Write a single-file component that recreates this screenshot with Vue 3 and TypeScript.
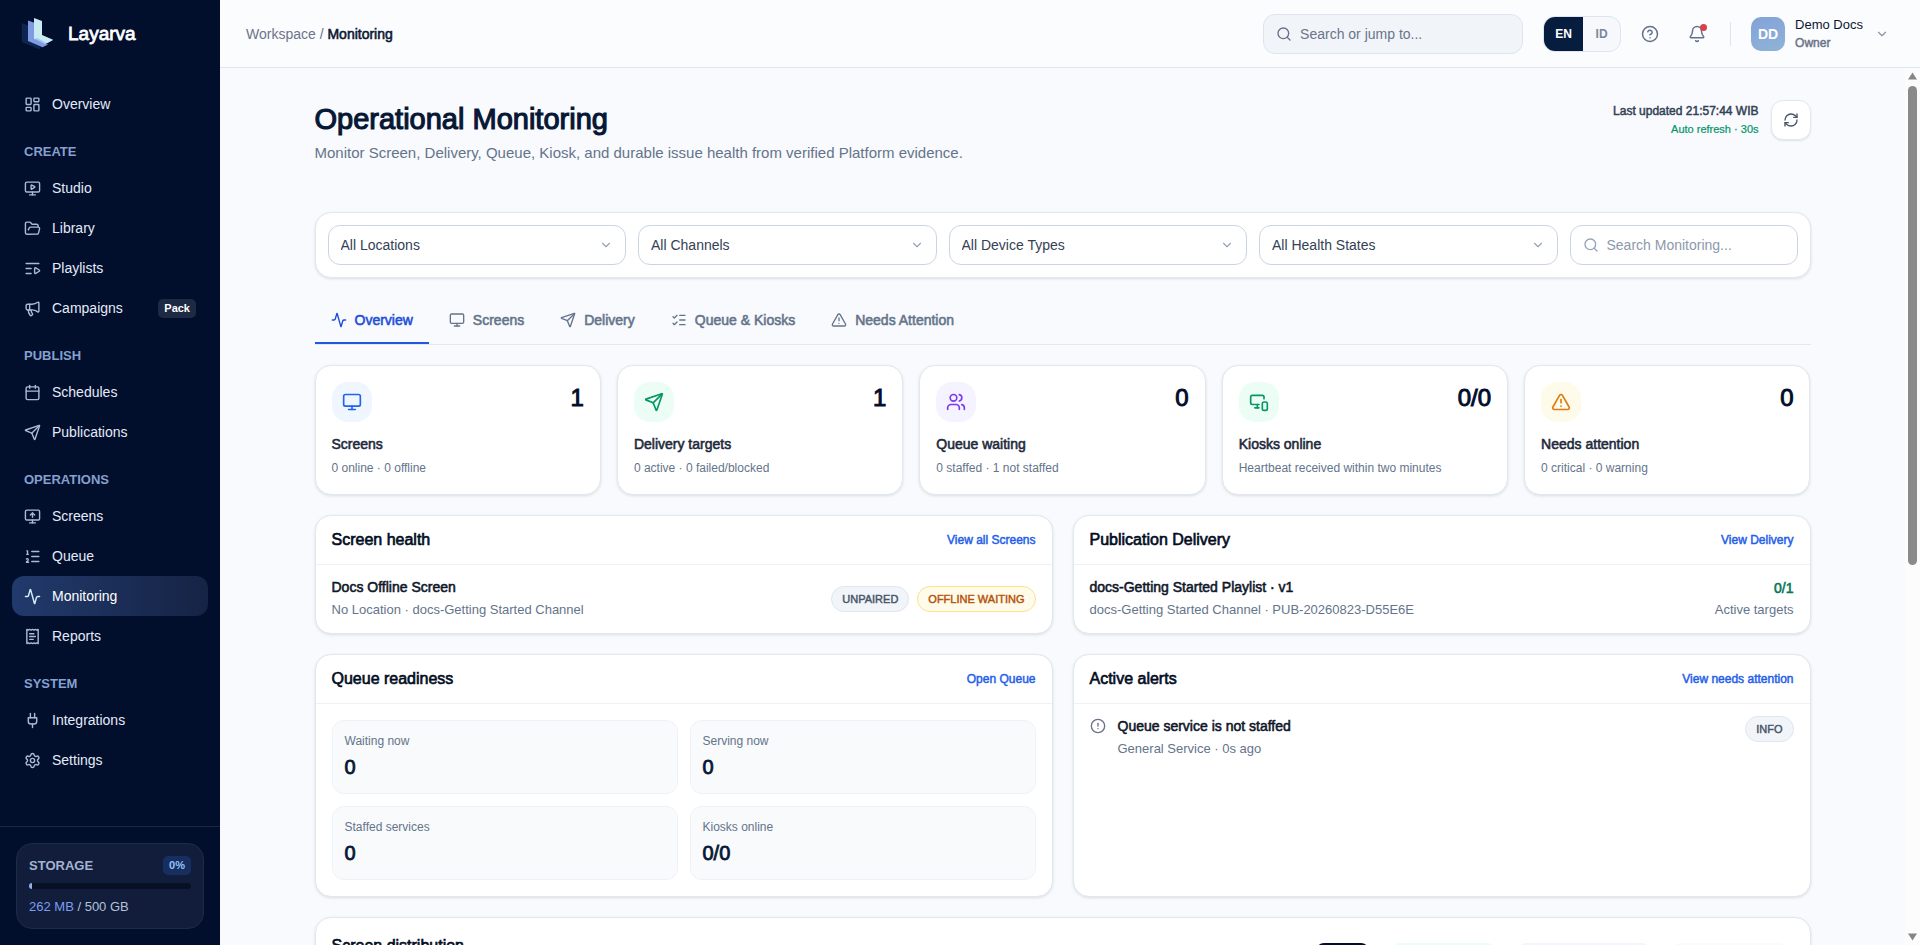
<script setup lang="ts">
import { h, ref } from 'vue'

const shapes: Record<string, string[]> = {
  dashboard: ['M4 3h5a1 1 0 0 1 1 1v7a1 1 0 0 1-1 1H4a1 1 0 0 1-1-1V4a1 1 0 0 1 1-1z', 'M15 3h5a1 1 0 0 1 1 1v3a1 1 0 0 1-1 1h-5a1 1 0 0 1-1-1V4a1 1 0 0 1 1-1z', 'M15 12h5a1 1 0 0 1 1 1v7a1 1 0 0 1-1 1h-5a1 1 0 0 1-1-1v-7a1 1 0 0 1 1-1z', 'M4 16h5a1 1 0 0 1 1 1v3a1 1 0 0 1-1 1H4a1 1 0 0 1-1-1v-3a1 1 0 0 1 1-1z'],
  monitor: ['M4 3h16a2 2 0 0 1 2 2v10a2 2 0 0 1-2 2H4a2 2 0 0 1-2-2V5a2 2 0 0 1 2-2z', 'M12 17v4', 'M8 21h8'],
  monitorPlay: ['M4 3h16a2 2 0 0 1 2 2v10a2 2 0 0 1-2 2H4a2 2 0 0 1-2-2V5a2 2 0 0 1 2-2z', 'M12 17v4', 'M8 21h8', 'M15.033 9.44a.647.647 0 0 1 0 1.12l-4.065 2.352a.645.645 0 0 1-.968-.56V7.648a.645.645 0 0 1 .967-.56z'],
  monitorUp: ['M4 3h16a2 2 0 0 1 2 2v10a2 2 0 0 1-2 2H4a2 2 0 0 1-2-2V5a2 2 0 0 1 2-2z', 'M12 17v4', 'M8 21h8', 'm9 10 3-3 3 3', 'M12 13V7'],
  folder: ['m6 14 1.5-2.9A2 2 0 0 1 9.24 10H20a2 2 0 0 1 1.94 2.5l-1.54 6a2 2 0 0 1-1.95 1.5H4a2 2 0 0 1-2-2V5a2 2 0 0 1 2-2h3.9a2 2 0 0 1 1.69.9l.81 1.2a2 2 0 0 0 1.67.9H18a2 2 0 0 1 2 2v2'],
  playlist: ['M21 5H3', 'M10 12H3', 'M10 19H3', 'M15 12.003a1 1 0 0 1 1.517-.859l4.997 2.997a1 1 0 0 1 0 1.718l-4.997 2.997a1 1 0 0 1-1.517-.86z'],
  megaphone: ['M11 6a13 13 0 0 0 8.4-2.8A1 1 0 0 1 21 4v12a1 1 0 0 1-1.6.8A13 13 0 0 0 11 14H5a2 2 0 0 1-2-2V8a2 2 0 0 1 2-2z', 'M6 14a12 12 0 0 0 2.4 7.2 2 2 0 0 0 3.2-2.4A8 8 0 0 1 10 14', 'M8 6v8'],
  calendar: ['M8 2v4', 'M16 2v4', 'M5 4h14a2 2 0 0 1 2 2v14a2 2 0 0 1-2 2H5a2 2 0 0 1-2-2V6a2 2 0 0 1 2-2z', 'M3 10h18'],
  send: ['M14.536 21.686a.5.5 0 0 0 .937-.024l6.5-19a.496.496 0 0 0-.635-.635l-19 6.5a.5.5 0 0 0-.024.937l7.93 3.18a2 2 0 0 1 1.112 1.11z', 'm21.854 2.147-10.94 10.939'],
  ordered: ['M11 5h10', 'M11 12h10', 'M11 19h10', 'M4 4h1v5', 'M4 9h2', 'M6.5 20H3.4c0-1 2.6-1.925 2.6-3.5a1.5 1.5 0 0 0-2.6-1.02'],
  activity: ['M22 12h-2.48a2 2 0 0 0-1.93 1.46l-2.35 8.36a.25.25 0 0 1-.48 0L9.24 2.18a.25.25 0 0 0-.48 0l-2.35 8.36A2 2 0 0 1 4.49 12H2'],
  receipt: ['M4 2v20l2-1 2 1 2-1 2 1 2-1 2 1 2-1 2 1V2l-2 1-2-1-2 1-2-1-2 1-2-1-2 1Z', 'M14 8H8', 'M16 12H8', 'M13 16H8'],
  plug: ['M12 22v-5', 'M9 8V2', 'M15 8V2', 'M18 8v5a4 4 0 0 1-4 4h-4a4 4 0 0 1-4-4V8Z'],
  settings: ['M9.671 4.136a2.34 2.34 0 0 1 4.659 0 2.34 2.34 0 0 0 3.319 1.915 2.34 2.34 0 0 1 2.33 4.033 2.34 2.34 0 0 0 0 3.831 2.34 2.34 0 0 1-2.33 4.033 2.34 2.34 0 0 0-3.319 1.915 2.34 2.34 0 0 1-4.659 0 2.34 2.34 0 0 0-3.32-1.915 2.34 2.34 0 0 1-2.33-4.033 2.34 2.34 0 0 0 0-3.831A2.34 2.34 0 0 1 6.35 6.051a2.34 2.34 0 0 0 3.319-1.915', 'M15 12a3 3 0 1 1-6 0 3 3 0 0 1 6 0z'],
  search: ['m21 21-4.34-4.34', 'M19 11a8 8 0 1 1-16 0 8 8 0 0 1 16 0z'],
  help: ['M22 12a10 10 0 1 1-20 0 10 10 0 0 1 20 0z', 'M9.09 9a3 3 0 0 1 5.83 1c0 2-3 3-3 3', 'M12 17h.01'],
  bell: ['M10.268 21a2 2 0 0 0 3.464 0', 'M3.262 15.326A1 1 0 0 0 4 17h16a1 1 0 0 0 .74-1.673C19.41 13.956 18 12.499 18 8A6 6 0 0 0 6 8c0 4.499-1.411 5.956-2.738 7.326'],
  chevron: ['m6 9 6 6 6-6'],
  refresh: ['M3 12a9 9 0 0 1 9-9 9.75 9.75 0 0 1 6.74 2.74L21 8', 'M21 3v5h-5', 'M21 12a9 9 0 0 1-9 9 9.75 9.75 0 0 1-6.74-2.74L3 16', 'M8 16H3v5'],
  checks: ['M13 5h8', 'M13 12h8', 'M13 19h8', 'm3 17 2 2 4-4', 'm3 7 2 2 4-4'],
  triangle: ['m21.73 18-8-14a2 2 0 0 0-3.48 0l-8 14A2 2 0 0 0 4 21h16a2 2 0 0 0 1.73-3', 'M12 9v4', 'M12 17h.01'],
  users: ['M16 21v-2a4 4 0 0 0-4-4H6a4 4 0 0 0-4 4v2', 'M16 3.128a4 4 0 0 1 0 7.744', 'M22 21v-2a4 4 0 0 0-3-3.87', 'M13 7a4 4 0 1 1-8 0 4 4 0 0 1 8 0z'],
  kiosk: ['M18 8V6a2 2 0 0 0-2-2H4a2 2 0 0 0-2 2v7a2 2 0 0 0 2 2h8', 'M10 19v-3.96 3.15', 'M7 19h5', 'M18 12h2a2 2 0 0 1 2 2v6a2 2 0 0 1-2 2h-2a2 2 0 0 1-2-2v-6a2 2 0 0 1 2-2z'],
  alert: ['M22 12a10 10 0 1 1-20 0 10 10 0 0 1 20 0z', 'M12 8v4', 'M12 16h.01'],
}

const Icon = (props: { name: string }) =>
  h('svg', { viewBox: '0 0 24 24', fill: 'none', stroke: 'currentColor', 'stroke-linecap': 'round', 'stroke-linejoin': 'round', 'aria-hidden': 'true' },
    shapes[props.name].map((d) => h('path', { d })))
Icon.props = ['name']

const nav = [
  { title: '', items: [{ icon: 'dashboard', label: 'Overview' }] },
  { title: 'CREATE', items: [
    { icon: 'monitorPlay', label: 'Studio' }, { icon: 'folder', label: 'Library' },
    { icon: 'playlist', label: 'Playlists' }, { icon: 'megaphone', label: 'Campaigns', badge: 'Pack' }] },
  { title: 'PUBLISH', items: [{ icon: 'calendar', label: 'Schedules' }, { icon: 'send', label: 'Publications' }] },
  { title: 'OPERATIONS', items: [
    { icon: 'monitorUp', label: 'Screens' }, { icon: 'ordered', label: 'Queue' },
    { icon: 'activity', label: 'Monitoring' }, { icon: 'receipt', label: 'Reports' }] },
  { title: 'SYSTEM', items: [{ icon: 'plug', label: 'Integrations' }, { icon: 'settings', label: 'Settings' }] },
] as { title: string; items: { icon: string; label: string; badge?: string }[] }[]

const language = ref('EN')
const query = ref('')
const filterQuery = ref('')
const filters = ['All Locations', 'All Channels', 'All Device Types', 'All Health States']
const activeTab = ref('Overview')
const tabs = [
  { icon: 'activity', label: 'Overview' }, { icon: 'monitor', label: 'Screens' }, { icon: 'send', label: 'Delivery' },
  { icon: 'checks', label: 'Queue & Kiosks' }, { icon: 'triangle', label: 'Needs Attention' },
]
const cards = [
  { icon: 'monitor', tone: 'blue', value: '1', label: 'Screens', note: '0 online · 0 offline' },
  { icon: 'send', tone: 'green', value: '1', label: 'Delivery targets', note: '0 active · 0 failed/blocked' },
  { icon: 'users', tone: 'violet', value: '0', label: 'Queue waiting', note: '0 staffed · 1 not staffed' },
  { icon: 'kiosk', tone: 'green', value: '0/0', label: 'Kiosks online', note: 'Heartbeat received within two minutes' },
  { icon: 'triangle', tone: 'amber', value: '0', label: 'Needs attention', note: '0 critical · 0 warning' },
]
const readiness = [
  { label: 'Waiting now', value: '0' }, { label: 'Serving now', value: '0' },
  { label: 'Staffed services', value: '0' }, { label: 'Kiosks online', value: '0/0' },
]
const storageUsed = 2
</script>

<template>
  <div class="app">
    <aside class="sidebar">
      <div class="brand">
        <svg class="logo" viewBox="20 17 36 36" aria-hidden="true">
          <path fill="#0d2550" d="M21.7 24l8 3v15l11 6-1.500 2.200-17.500-7.200z" />
          <path fill="#7f9ce2" d="M28 21.500l7 2.500v15l13 6.500-5.500 2.800-14.500-6.300z" />
          <path fill="#a9c4f3" d="M34 39.500l8-3.500 11 4.800-8 4.500z" />
          <path fill="#c8ecf2" d="M34 19l8 3v16l-8 2z" />
          <path fill="#c8ecf2" d="M42 36.200l11 4.700-6 3.300-9.500-4.900z" />
        </svg>
        <span class="brand-name heavy">Layarva</span>
      </div>
      <nav class="nav" aria-label="Main">
        <div v-for="group in nav" :key="group.title">
          <div v-if="group.title" class="nav-title">{{ group.title }}</div>
          <a v-for="item in group.items" :key="item.label" href="#" class="nav-item" :class="{ active: item.label === 'Monitoring' }">
            <Icon :name="item.icon" class="nav-icon" />
            <span>{{ item.label }}</span>
            <span v-if="item.badge" class="pack">{{ item.badge }}</span>
          </a>
        </div>
      </nav>
      <div class="side-foot">
        <div class="storage">
          <div class="storage-head"><span class="storage-title">STORAGE</span><span class="percent">0%</span></div>
          <div class="meter"><div class="meter-fill" :style="{ width: storageUsed + '%' }"></div></div>
          <div class="storage-text"><span class="used">262 MB</span> / 500 GB</div>
        </div>
      </div>
    </aside>

    <div class="body">
      <header class="topbar">
        <div class="crumbs">Workspace / <span class="crumb-now heavy">Monitoring</span></div>
        <label class="top-search">
          <Icon name="search" class="icon16" />
          <input v-model="query" type="text" placeholder="Search or jump to..." aria-label="Search or jump to" />
        </label>
        <div class="lang">
          <button v-for="code in ['EN', 'ID']" :key="code" type="button" class="lang-btn" :class="{ on: language === code }" @click="language = code">{{ code }}</button>
        </div>
        <button type="button" class="icon-btn" aria-label="Help"><Icon name="help" class="icon18" /></button>
        <button type="button" class="icon-btn" aria-label="Notifications"><Icon name="bell" class="icon18" /><span class="dot"></span></button>
        <span class="divider"></span>
        <button type="button" class="account">
          <span class="avatar">DD</span>
          <span class="who"><span class="who-name">Demo Docs</span><span class="who-role heavy">Owner</span></span>
          <Icon name="chevron" class="icon14" />
        </button>
      </header>

      <div class="scroll-row">
        <main class="main">
          <div class="content">
            <div class="page-head">
              <div>
                <h1 class="heavy">Operational Monitoring</h1>
                <p class="lead">Monitor Screen, Delivery, Queue, Kiosk, and durable issue health from verified Platform evidence.</p>
              </div>
              <div class="updated">
                <div class="updated-text">
                  <div class="updated-at heavy">Last updated 21:57:44 WIB</div>
                  <div class="updated-auto">Auto refresh · 30s</div>
                </div>
                <button type="button" class="refresh" aria-label="Refresh"><Icon name="refresh" class="icon16" /></button>
              </div>
            </div>

            <div class="filters">
              <div v-for="name in filters" :key="name" class="select">
                <select :aria-label="name"><option>{{ name }}</option></select>
                <Icon name="chevron" class="select-chevron" />
              </div>
              <label class="filter-search">
                <Icon name="search" class="icon16" />
                <input v-model="filterQuery" type="text" placeholder="Search Monitoring..." aria-label="Search Monitoring" />
              </label>
            </div>

            <div class="tabs" role="tablist">
              <button v-for="tab in tabs" :key="tab.label" type="button" role="tab" :aria-selected="activeTab === tab.label" class="tab heavy" :class="{ active: activeTab === tab.label }" @click="activeTab = tab.label">
                <Icon :name="tab.icon" class="icon16" />{{ tab.label }}
              </button>
            </div>

            <div class="cards">
              <article v-for="card in cards" :key="card.label" class="card">
                <div class="card-top">
                  <span class="card-icon" :class="card.tone"><Icon :name="card.icon" class="icon20" /></span>
                  <span class="card-value heavy">{{ card.value }}</span>
                </div>
                <div class="card-label heavy">{{ card.label }}</div>
                <div class="card-note">{{ card.note }}</div>
              </article>
            </div>

            <div class="panels">
              <section class="panel">
                <div class="panel-head"><h2 class="heavy">Screen health</h2><a href="#" class="heavy">View all Screens</a></div>
                <div class="row">
                  <div class="row-main">
                    <div class="row-title heavy">Docs Offline Screen</div>
                    <div class="row-sub">No Location · docs-Getting Started Channel</div>
                  </div>
                  <span class="chip heavy">UNPAIRED</span>
                  <span class="chip warn heavy">OFFLINE WAITING</span>
                </div>
              </section>
              <section class="panel">
                <div class="panel-head"><h2 class="heavy">Publication Delivery</h2><a href="#" class="heavy">View Delivery</a></div>
                <div class="row">
                  <div class="row-main">
                    <div class="row-title heavy">docs-Getting Started Playlist · v1</div>
                    <div class="row-sub">docs-Getting Started Channel · PUB-20260823-D55E6E</div>
                  </div>
                  <div class="targets">
                    <div class="targets-value heavy">0/1</div>
                    <div class="row-sub">Active targets</div>
                  </div>
                </div>
              </section>
              <section class="panel">
                <div class="panel-head"><h2 class="heavy">Queue readiness</h2><a href="#" class="heavy">Open Queue</a></div>
                <div class="tiles">
                  <div v-for="tile in readiness" :key="tile.label" class="tile">
                    <div class="tile-label">{{ tile.label }}</div>
                    <div class="tile-value heavy">{{ tile.value }}</div>
                  </div>
                </div>
              </section>
              <section class="panel">
                <div class="panel-head"><h2 class="heavy">Active alerts</h2><a href="#" class="heavy">View needs attention</a></div>
                <div class="row alert">
                  <Icon name="alert" class="icon16" />
                  <div class="row-main">
                    <div class="row-title heavy">Queue service is not staffed</div>
                    <div class="row-sub">General Service · 0s ago</div>
                  </div>
                  <span class="chip heavy">INFO</span>
                </div>
              </section>
            </div>

            <section class="panel distribution">
              <h2 class="heavy">Screen distribution</h2>
              <div class="pills">
                <span class="pill dark"></span>
                <span class="pill mint"></span>
                <span class="pill sky"></span>
                <span class="pill mist"></span>
              </div>
            </section>
          </div>
        </main>
        <div class="scrollbar" aria-hidden="true">
          <svg viewBox="0 0 10 8"><path d="M5 0l5 8H0z" /></svg>
          <div class="track"><div class="thumb"></div></div>
          <svg viewBox="0 0 10 8"><path d="M5 8L0 0h10z" /></svg>
        </div>
      </div>
    </div>
  </div>
</template>

<style>
body { margin: 0; }
</style>

<style scoped>
* { box-sizing: border-box; }
.app { display: flex; height: 100vh; overflow: hidden; background: #f8fafd; color: #0b1732; font-family: "Liberation Sans", Arial, sans-serif; font-size: 14px; line-height: 20px; }
button, input, select { font: inherit; color: inherit; margin: 0; }
button { border: 0; padding: 0; background: none; cursor: pointer; }
a { text-decoration: none; }
h1, h2, p { margin: 0; font-weight: 400; }
.heavy { font-weight: 400; -webkit-text-stroke: 0.04em currentColor; }
svg { flex: none; stroke-width: 2; }
.icon14 { width: 14px; height: 14px; }
.icon16 { width: 16px; height: 16px; }
.icon18 { width: 18px; height: 18px; }
.icon20 { width: 20px; height: 20px; }

.sidebar { display: flex; flex-direction: column; flex: none; width: 220px; background: #010e2c; }
.brand { display: flex; align-items: center; gap: 12px; height: 68px; padding: 0 20px; }
.logo { width: 36px; height: 36px; }
.brand-name { color: #fff; font-size: 19px; line-height: 24px; }
.nav { flex: 1; padding: 16px 12px; overflow: hidden; }
.nav-title { padding: 20px 12px 8px; color: #86a0cf; font-size: 13px; font-weight: 700; line-height: 16px; }
.nav-item { display: flex; align-items: center; gap: 11px; height: 40px; padding: 0 12px; border-radius: 12px; color: #e3ebf8; }
.nav-icon { width: 17px; height: 17px; color: #a9bad8; }
.nav-item.active { color: #fff; background: linear-gradient(90deg, #213a6c, #162345); }
.nav-item.active .nav-icon { color: #d3f0f7; }
.pack { margin-left: auto; padding: 0 6px; border-radius: 5px; background: #1e2943; color: #fff; font-size: 11px; font-weight: 700; line-height: 19px; }
.side-foot { padding: 16px; border-top: 1px solid #1a2743; }
.storage { display: flex; flex-direction: column; gap: 8px; padding: 12px; border: 1px solid #1e2b48; border-radius: 16px; background: #111d3a; }
.storage-head { display: flex; align-items: center; justify-content: space-between; line-height: 19px; }
.storage-title { color: #a3b4d2; font-size: 13px; font-weight: 700; }
.percent { padding: 0 6px; border-radius: 5px; background: #172e60; color: #93c2f8; font-size: 11px; font-weight: 700; }
.meter { height: 6px; border-radius: 3px; background: #081124; overflow: hidden; }
.meter-fill { height: 100%; background: #93aee8; }
.storage-text { color: #b3c2dc; font-size: 13px; line-height: 19px; }
.used { color: #7e9cf0; }

.body { display: flex; flex: 1; flex-direction: column; min-width: 0; }
.topbar { display: flex; align-items: center; flex: none; height: 68px; padding: 0 31px 0 26px; border-bottom: 1px solid #dfe5ee; background: #fbfcfe; }
.crumbs { margin-right: auto; color: #6b7489; }
.crumb-now { color: #0b1732; }
.top-search { display: flex; align-items: center; gap: 8px; width: 260px; height: 40px; padding: 0 12px; border: 1px solid #dde4ee; border-radius: 12px; background: #f1f5fa; color: #64708a; }
.top-search input, .filter-search input { flex: 1; min-width: 0; padding: 0; border: 0; outline: 0; background: none; color: #1e293b; }
.top-search input::placeholder { color: #6b7489; }
.lang { display: flex; margin-left: 20px; height: 36px; overflow: hidden; border: 1px solid #dde4ee; border-radius: 12px; background: #f6f8fb; }
.lang-btn { width: 37px; color: #7b869b; font-size: 12px; font-weight: 700; }
.lang-btn.on { width: 39px; background: #071d3f; color: #fff; }
.icon-btn { display: flex; align-items: center; justify-content: center; position: relative; width: 36px; height: 36px; margin-left: 11px; color: #64708a; }
.dot { position: absolute; top: 8px; right: 8px; width: 7px; height: 7px; border-radius: 50%; background: #d8404c; }
.divider { width: 1px; height: 24px; margin: 0 20px 0 15px; background: #dfe5ee; }
.account { display: flex; align-items: center; gap: 10px; text-align: left; color: #8792a6; }
.avatar { width: 34px; height: 34px; border-radius: 10px; background: linear-gradient(160deg, #83a2d9, #8fb3d6); color: #fff; font-weight: 700; line-height: 34px; text-align: center; }
.who { display: flex; flex-direction: column; margin-right: 2px; }
.who-name { color: #0b1732; font-size: 13px; line-height: 19px; }
.who-role { color: #6b7489; font-size: 12px; line-height: 19px; }

.scroll-row { display: flex; flex: 1; min-height: 0; }
.main { flex: 1; min-width: 0; overflow: hidden; }
.content { max-width: 1560px; margin: 0 auto; padding: 32px; }
.page-head { display: flex; justify-content: space-between; margin-bottom: 48px; }
h1 { color: #071735; font-size: 29px; line-height: 38px; }
.lead { margin-top: 4px; color: #64748b; font-size: 15px; line-height: 22px; }
.updated { display: flex; gap: 12px; text-align: right; }
.updated-text { padding-top: 2px; }
.updated-at { color: #334155; font-size: 12px; line-height: 18px; }
.updated-auto { color: #059669; font-size: 11px; line-height: 18px; -webkit-text-stroke: 0.02em currentColor; }
.refresh { display: flex; align-items: center; justify-content: center; width: 40px; height: 40px; border: 1px solid #e2e8f0; border-radius: 12px; background: #fff; color: #475569; box-shadow: 0 1px 2px rgba(15, 23, 42, 0.1); }

.filters { display: grid; grid-template-columns: repeat(4, minmax(0, 1fr)) 228px; gap: 12px; padding: 12px; border: 1px solid #e2e8f0; border-radius: 16px; background: #fff; box-shadow: 0 1px 3px rgba(15, 23, 42, 0.12); }
.select { position: relative; }
.select select { width: 100%; height: 40px; padding: 0 36px 0 12px; border: 1px solid #cbd5e1; border-radius: 12px; background: #fff; color: #334155; appearance: none; }
.select-chevron { position: absolute; top: 13px; right: 13px; width: 14px; height: 14px; color: #94a3b8; pointer-events: none; }
.filter-search { display: flex; align-items: center; gap: 8px; height: 40px; padding: 0 12px; border: 1px solid #cbd5e1; border-radius: 12px; color: #94a3b8; }
.filter-search input::placeholder { color: #8d99ab; }

.tabs { display: flex; gap: 4px; margin-top: 20px; border-bottom: 1px solid #e2e8f0; }
.tab { display: flex; align-items: center; gap: 8px; height: 46px; padding: 0 16px; border-bottom: 2px solid transparent; color: #64748b; }
.tab.active { border-color: #1d5ae0; color: #1d4ed8; }

.cards { display: grid; grid-template-columns: repeat(5, minmax(0, 1fr)); gap: 16px; margin: 20px 0; }
.card, .panel { border: 1px solid #e2e8f0; border-radius: 16px; background: #fff; box-shadow: 0 1px 3px rgba(15, 23, 42, 0.12); }
.card { padding: 16px; }
.card-top { display: flex; justify-content: space-between; margin-bottom: 12px; }
.card-icon { display: flex; align-items: center; justify-content: center; width: 40px; height: 40px; border-radius: 16px; }
.blue { background: #eff6ff; color: #2563eb; }
.green { background: #ecfdf5; color: #059669; }
.violet { background: #f5f3ff; color: #7c3aed; }
.amber { background: #fffbeb; color: #e07a12; }
.card-value { color: #020c2b; font-size: 24px; line-height: 32px; }
.card-label { margin-bottom: 4px; color: #1e293b; }
.card-note { color: #64748b; font-size: 12px; line-height: 20px; }

.panels { display: grid; grid-template-columns: repeat(2, minmax(0, 1fr)); gap: 20px; margin-bottom: 20px; }
.panel-head { display: flex; align-items: center; justify-content: space-between; height: 49px; padding: 0 16px; border-bottom: 1px solid #eef2f7; }
h2 { color: #020c1f; font-size: 16px; line-height: 24px; }
.panel-head a { color: #2460ea; font-size: 12px; }
.row { display: flex; align-items: center; gap: 8px; padding: 12px 16px; }
.row-main { flex: 1; min-width: 0; }
.row-title { margin-bottom: 2px; color: #0f172a; line-height: 20px; }
.row-sub { color: #64748b; font-size: 13px; line-height: 22px; }
.chip { height: 26px; padding: 0 10px; border: 1px solid #e0e6ef; border-radius: 13px; background: #f1f5f9; color: #475569; font-size: 11px; line-height: 24px; white-space: nowrap; }
.chip.warn { border-color: #fde28a; background: #fffbeb; color: #b45309; }
.targets { text-align: right; }
.targets-value { color: #047857; line-height: 22px; }
.alert { align-items: flex-start; gap: 12px; }
.alert .icon16 { margin-top: 2px; color: #64748b; }
.tiles { display: grid; grid-template-columns: repeat(2, minmax(0, 1fr)); gap: 12px; padding: 16px; }
.tile { padding: 11px 12px; border: 1px solid #eef2f7; border-radius: 12px; background: #f8fafc; }
.tile-label { color: #64748b; font-size: 12px; line-height: 18px; }
.tile-value { margin: 3px 0 1px; color: #071735; font-size: 20px; line-height: 28px; }
.distribution { display: flex; justify-content: space-between; padding: 16px; }
.pills { display: flex; gap: 23px; padding: 9px 7px 0 0; }
.pill { height: 28px; border-radius: 8px; }
.dark { width: 53px; background: #020c2b; }
.mint { width: 103px; background: #ecfdf5; }
.sky { width: 132px; background: #eff6ff; }
.mist { width: 114px; background: #f8fafc; }

.scrollbar { display: flex; flex-direction: column; align-items: center; gap: 6px; flex: none; width: 15px; padding: 4px 0; background: #fcfcfc; }
.scrollbar svg { width: 9px; height: 8px; fill: #858585; }
.track { flex: 1; width: 9px; }
.thumb { height: 57%; border-radius: 5px; background: #8a8a8a; }
</style>
